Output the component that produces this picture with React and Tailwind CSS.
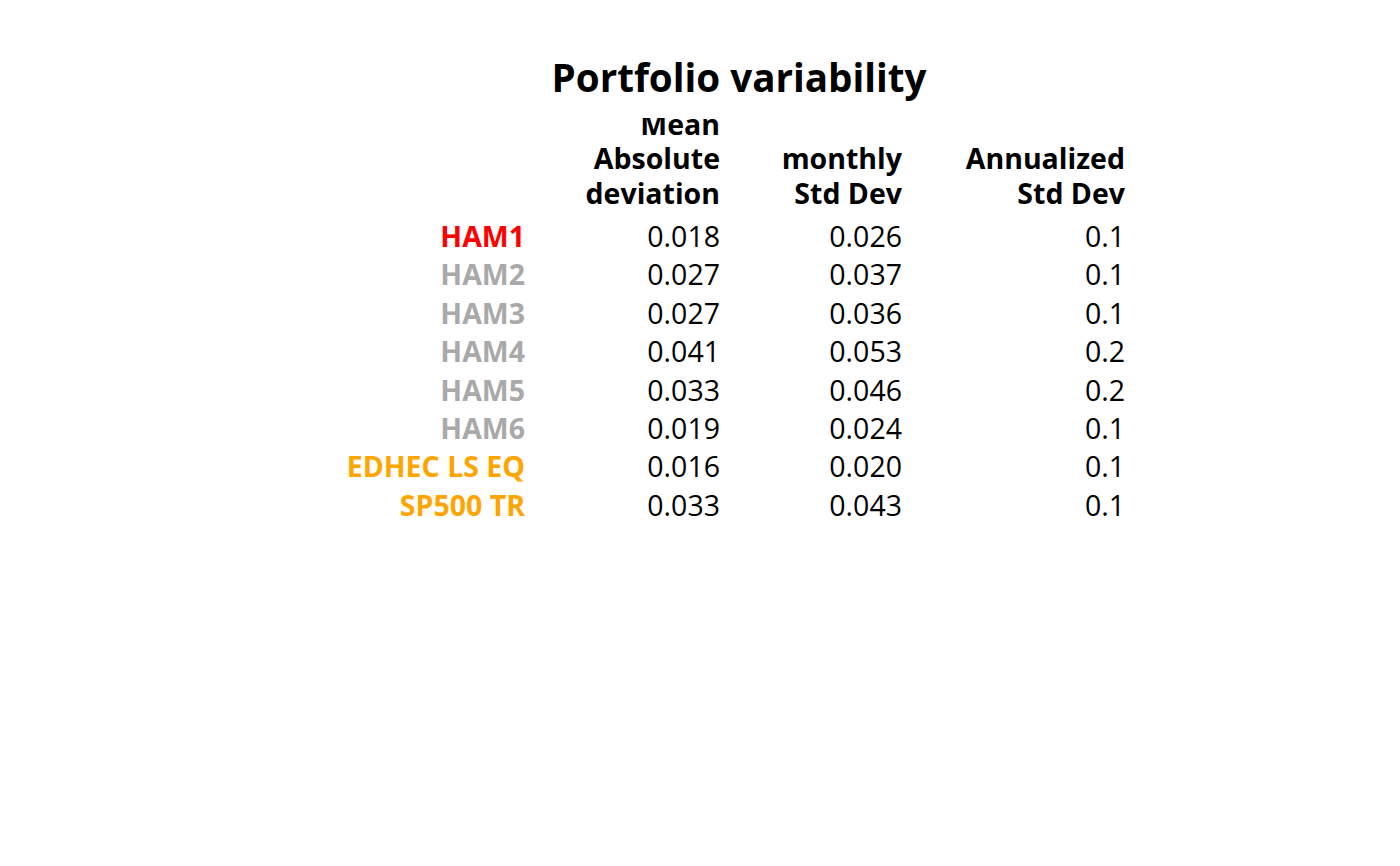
import React from "react";

const rows = [
  { name: "HAM1", color: "text-[#ff0000]", mad: "0.018", sd: "0.026", ann: "0.1" },
  { name: "HAM2", color: "text-[#a9a9a9]", mad: "0.027", sd: "0.037", ann: "0.1" },
  { name: "HAM3", color: "text-[#a9a9a9]", mad: "0.027", sd: "0.036", ann: "0.1" },
  { name: "HAM4", color: "text-[#a9a9a9]", mad: "0.041", sd: "0.053", ann: "0.2" },
  { name: "HAM5", color: "text-[#a9a9a9]", mad: "0.033", sd: "0.046", ann: "0.2" },
  { name: "HAM6", color: "text-[#a9a9a9]", mad: "0.019", sd: "0.024", ann: "0.1" },
  { name: "EDHEC LS EQ", color: "text-[#ffa500]", mad: "0.016", sd: "0.020", ann: "0.1" },
  { name: "SP500 TR", color: "text-[#ffa500]", mad: "0.033", sd: "0.043", ann: "0.1" },
];

function HeadCell({ lines }) {
  return (
    <div className="h-[99px] overflow-hidden flex flex-col justify-end pb-[7px] text-right font-bold leading-[34.5px]">
      {lines.map((l) => (
        <div key={l}>{l}</div>
      ))}
    </div>
  );
}

export default function App() {
  return (
    <div className="w-[1400px] h-[866px] bg-white text-black font-['Open_Sans','Noto_Sans',sans-serif]">
      <div className="ml-[340px] w-[785px] pt-[51px]">
        <h1 className="text-center pl-[13px] text-[38.6px] leading-[52px] font-bold">Portfolio variability</h1>
        <div className="mt-[15px] grid grid-cols-[185px_195px_182px_223px] text-[28.5px]">
          <div />
          <HeadCell lines={["Mean", "Absolute", "deviation"]} />
          <HeadCell lines={["monthly", "Std Dev"]} />
          <HeadCell lines={["Annualized", "Std Dev"]} />
          {rows.map((r) => (
            <React.Fragment key={r.name}>
              <div className={`text-right font-bold leading-[38.4px] whitespace-nowrap ${r.color}`}>{r.name}</div>
              <div className="text-right leading-[38.4px]">{r.mad}</div>
              <div className="text-right leading-[38.4px]">{r.sd}</div>
              <div className="text-right leading-[38.4px]">{r.ann}</div>
            </React.Fragment>
          ))}
        </div>
      </div>
    </div>
  );
}
